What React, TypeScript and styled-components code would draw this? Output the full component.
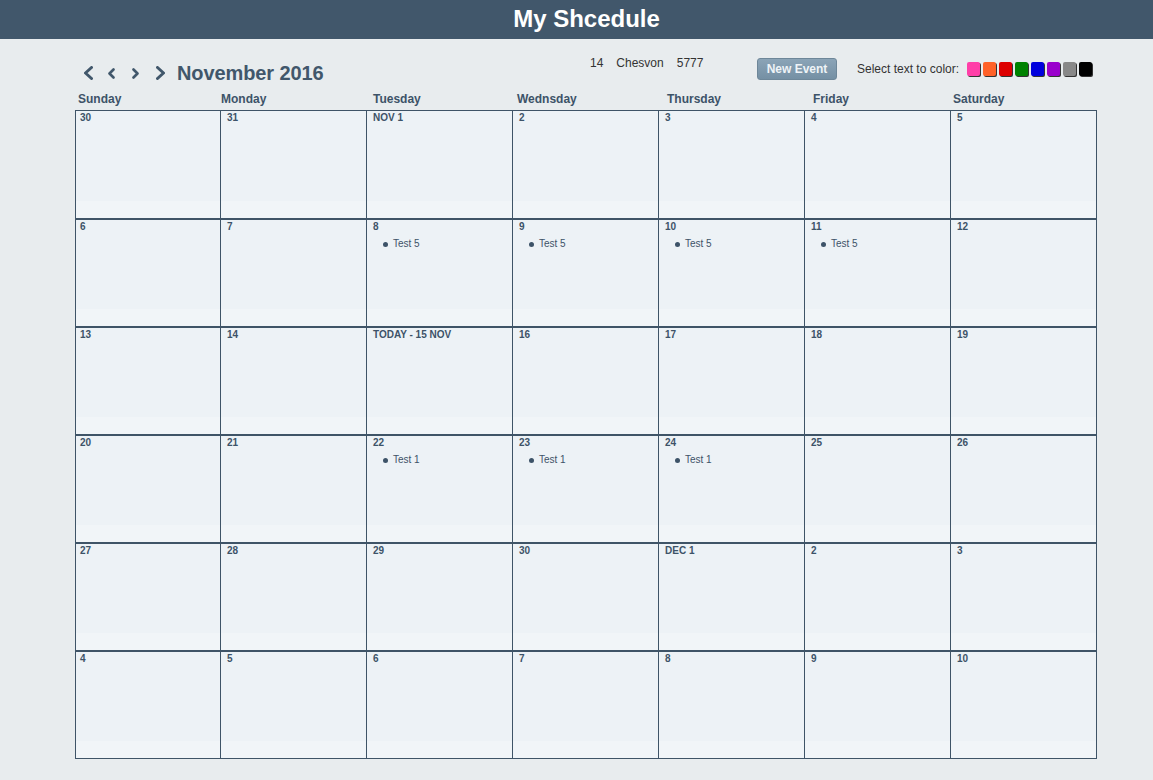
import React, { FC } from 'react';
import styled, { createGlobalStyle } from 'styled-components';

const colors = {
  header: '#41576b',
  page: '#e8ecee',
  text: '#3d5368',
  line: '#3f5467',
  cell: '#edf2f6',
  cellLight: '#f1f5f8',
};

const GlobalStyle = createGlobalStyle`
  body {
    margin: 0;
    background: ${colors.page};
    font-family: 'Liberation Sans', Arial, sans-serif;
  }
`;

type Day = {
  label: string;
  events?: string[];
};

const dayNames = ['Sunday', 'Monday', 'Tuesday', 'Wednsday', 'Thursday', 'Friday', 'Saturday'];

const weeks: Day[][] = [
  [{ label: '30' }, { label: '31' }, { label: 'NOV 1' }, { label: '2' }, { label: '3' }, { label: '4' }, { label: '5' }],
  [
    { label: '6' },
    { label: '7' },
    { label: '8', events: ['Test 5'] },
    { label: '9', events: ['Test 5'] },
    { label: '10', events: ['Test 5'] },
    { label: '11', events: ['Test 5'] },
    { label: '12' },
  ],
  [{ label: '13' }, { label: '14' }, { label: 'TODAY - 15 NOV' }, { label: '16' }, { label: '17' }, { label: '18' }, { label: '19' }],
  [
    { label: '20' },
    { label: '21' },
    { label: '22', events: ['Test 1'] },
    { label: '23', events: ['Test 1'] },
    { label: '24', events: ['Test 1'] },
    { label: '25' },
    { label: '26' },
  ],
  [{ label: '27' }, { label: '28' }, { label: '29' }, { label: '30' }, { label: 'DEC 1' }, { label: '2' }, { label: '3' }],
  [{ label: '4' }, { label: '5' }, { label: '6' }, { label: '7' }, { label: '8' }, { label: '9' }, { label: '10' }],
];

const swatches = ['#ff3fa8', '#ff6128', '#dd0000', '#008200', '#0000dd', '#9a00cc', '#888888', '#000000'];

const Chevron: FC<{ dir: 'left' | 'right'; big?: boolean }> = ({ dir, big }) => {
  const h = big ? 14 : 11;
  const w = big ? 9 : 7;
  const points =
    dir === 'left' ? `${w - 1.5},1.5 1.5,${h / 2} ${w - 1.5},${h - 1.5}` : `1.5,1.5 ${w - 1.5},${h / 2} 1.5,${h - 1.5}`;
  return (
    <svg width={w} height={h} viewBox={`0 0 ${w} ${h}`}>
      <polyline points={points} fill="none" stroke={colors.header} strokeWidth={big ? 3 : 2.6} strokeLinecap="round" strokeLinejoin="round" />
    </svg>
  );
};

const App: FC = () => {
  return (
    <Root>
      <GlobalStyle />
      <TopBar>My Shcedule</TopBar>
      <Main>
        <Toolbar>
          <NavGroup>
            <NavButton>
              <Chevron dir="left" big />
            </NavButton>
            <NavButton>
              <Chevron dir="left" />
            </NavButton>
            <NavButton>
              <Chevron dir="right" />
            </NavButton>
            <NavButton>
              <Chevron dir="right" big />
            </NavButton>
            <Month>November 2016</Month>
          </NavGroup>
          <HebrewDate>
            <span>14</span>
            <span>Chesvon</span>
            <span>5777</span>
          </HebrewDate>
          <NewEventButton>New Event</NewEventButton>
          <ColorPicker>
            <ColorLabel>Select text to color:</ColorLabel>
            {swatches.map((c) => (
              <Swatch key={c} color={c} />
            ))}
          </ColorPicker>
        </Toolbar>

        <DayNames>
          {dayNames.map((d) => (
            <DayName key={d}>{d}</DayName>
          ))}
        </DayNames>

        <Grid>
          {weeks.map((week, wi) => (
            <Week key={wi} first={wi === 0}>
              {week.map((day, di) => (
                <Cell key={di} last={di === 6} firstCol={di === 0}>
                  <CellLabel>{day.label}</CellLabel>
                  {day.events && (
                    <EventList>
                      {day.events.map((e) => (
                        <EventItem key={e}>{e}</EventItem>
                      ))}
                    </EventList>
                  )}
                </Cell>
              ))}
            </Week>
          ))}
        </Grid>
      </Main>
    </Root>
  );
};

export default App;

const Root = styled.div`
  min-height: 780px;
  background: ${colors.page};
`;

const TopBar = styled.header`
  height: 39px;
  background: ${colors.header};
  color: #fff;
  font-size: 24px;
  font-weight: 700;
  line-height: 38px;
  text-align: center;
  padding-left: 20px;
`;

const Main = styled.main`
  width: 1022px;
  margin-left: 75px;
  padding-top: 16px;
`;

const Toolbar = styled.div`
  display: grid;
  grid-template-columns: 515px 167px 80px auto;
  align-items: start;
  height: 37px;
`;

const NavGroup = styled.div`
  display: flex;
  align-items: center;
  padding-left: 7px;
  padding-top: 7px;
`;

const NavButton = styled.span`
  display: inline-flex;
  width: 24px;
  justify-content: flex-start;
  padding-left: 2px;
  box-sizing: border-box;
`;

const Month = styled.span`
  margin-left: -1px;
  font-size: 20px;
  font-weight: 700;
  color: ${colors.header};
  line-height: 22px;
  letter-spacing: -0.1px;
`;

const HebrewDate = styled.div`
  display: flex;
  gap: 13px;
  font-size: 12px;
  color: #333;
  padding-top: 1px;
`;

const NewEventButton = styled.button`
  width: 80px;
  height: 22px;
  margin-top: 3px;
  border: 1px solid #6e8799;
  border-radius: 3px;
  background: linear-gradient(#8ba4b7, #7590a4);
  color: #eef3f7;
  font-family: inherit;
  font-size: 12px;
  font-weight: 700;
  padding: 0;
`;

const ColorPicker = styled.div`
  display: flex;
  align-items: center;
  gap: 3px;
  padding-left: 20px;
  padding-top: 7px;
`;

const ColorLabel = styled.span`
  font-size: 12px;
  color: #333;
  margin-right: 5px;
`;

const Swatch = styled.span<{ color: string }>`
  width: 13px;
  height: 14px;
  border-radius: 2px;
  background: ${(p) => p.color};
  box-shadow: 1px 1px 0 #333;
`;

const DayNames = styled.div`
  display: grid;
  grid-template-columns: 143px 152px 144px 150px 146px 140px auto;
  padding-left: 3px;
  height: 18px;
  align-items: start;
`;

const DayName = styled.span`
  font-size: 12px;
  font-weight: 700;
  color: ${colors.text};
  line-height: 14px;
`;

const Grid = styled.div`
  border: 1px solid ${colors.line};
  background: ${colors.cell};
`;

const Week = styled.div<{ first: boolean }>`
  display: grid;
  grid-template-columns: 145px repeat(5, 146px) 145px;
  height: ${(p) => (p.first ? 107 : 106)}px;
  border-top: ${(p) => (p.first ? 'none' : `2px solid ${colors.line}`)};
`;

const Cell = styled.div<{ last: boolean; firstCol: boolean }>`
  border-right: ${(p) => (p.last ? 'none' : `1px solid ${colors.line}`)};
  background: linear-gradient(
    ${colors.cell} 0,
    ${colors.cell} 84%,
    ${colors.cellLight} 84%,
    ${colors.cellLight} 100%
  );
  padding: 1px 0 0 ${(p) => (p.firstCol ? 4 : 6)}px;
`;

const CellLabel = styled.div`
  font-size: 10px;
  font-weight: 700;
  color: ${colors.text};
  line-height: 12px;
`;

const EventList = styled.ul`
  margin: 5px 0 0;
  padding: 0 0 0 10px;
  list-style: none;
`;

const EventItem = styled.li`
  display: flex;
  align-items: center;
  gap: 5px;
  font-size: 10px;
  color: ${colors.text};
  line-height: 12px;

  &::before {
    content: '';
    width: 5px;
    height: 5px;
    border-radius: 50%;
    background: ${colors.text};
  }
`;
